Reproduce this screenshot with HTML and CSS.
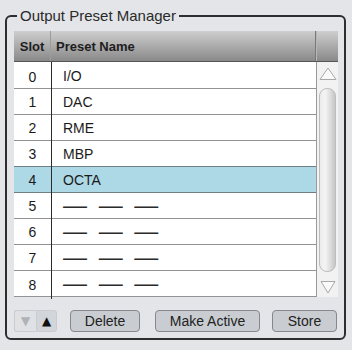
FILE: index.html
```html
<!DOCTYPE html>
<html lang="en">
<head>
    <meta charset="UTF-8">
    <meta name="viewport" content="width=device-width, initial-scale=1.0">
    <title>Output Preset Manager</title>
    <link rel="stylesheet" href="styles.css">
</head>
<body>
    <fieldset class="group">
        <legend class="group-title">Output Preset Manager</legend>

        <div class="preset-table">
            <div class="table-head">
                <div class="col-slot">Slot</div>
                <div class="col-name">Preset Name</div>
                <div class="col-corner"></div>
            </div>
            <div class="table-body">
                <div class="rows">
                    <div class="row first"><div class="cell-slot">0</div><div class="cell-name">I/O</div></div>
                    <div class="row"><div class="cell-slot">1</div><div class="cell-name">DAC</div></div>
                    <div class="row"><div class="cell-slot">2</div><div class="cell-name">RME</div></div>
                    <div class="row"><div class="cell-slot">3</div><div class="cell-name">MBP</div></div>
                    <div class="row active"><div class="cell-slot">4</div><div class="cell-name">OCTA</div></div>
                    <div class="row"><div class="cell-slot">5</div><div class="cell-name empty">— — —</div></div>
                    <div class="row"><div class="cell-slot">6</div><div class="cell-name empty">— — —</div></div>
                    <div class="row"><div class="cell-slot">7</div><div class="cell-name empty">— — —</div></div>
                    <div class="row"><div class="cell-slot">8</div><div class="cell-name empty">— — —</div></div>
                </div>
                <div class="scrollbar">
                    <svg class="scroll-arrow up" width="18" height="13" viewBox="0 0 18 13">
                        <polygon points="1,12.5 9,1 17,12.5" fill="#fafafa" stroke="#a8a8a8" stroke-width="1"/>
                    </svg>
                    <div class="thumb"></div>
                    <svg class="scroll-arrow down" width="16" height="13" viewBox="0 0 16 13">
                        <polygon points="1,0.5 8,12 15,0.5" fill="#fafafa" stroke="#a8a8a8" stroke-width="1"/>
                    </svg>
                </div>
            </div>
        </div>

        <div class="actions">
            <div class="stepper">
                <button class="step disabled">&#9660;</button>
                <button class="step">&#9650;</button>
            </div>
            <button class="btn btn-delete">Delete</button>
            <button class="btn btn-active">Make Active</button>
            <button class="btn btn-store">Store</button>
        </div>
    </fieldset>
</body>
</html>
```

FILE: styles.css
```css
body {
    margin: 0;
    padding: 7px 0 0 5px;
    background: #e3e5e9;
    font-family: 'Liberation Sans', Arial, sans-serif;
    color: #1a1a1a;
}

.group {
    box-sizing: border-box;
    width: 341px;
    margin: 0;
    padding: 7px 6px 6px 7px;
    border: 2px solid #2e2e2e;
    border-radius: 6px;
    min-width: 0;
}

.group-title {
    font-size: 15px;
    line-height: 17px;
    padding: 0 3px;
    margin-left: 3px;
    color: #2a2a2a;
}

.preset-table {
    width: 324px;
}

/* Header */
.table-head {
    display: flex;
    height: 30px;
    border-bottom: 1px solid #555;
    background: linear-gradient(#cecece, #898989);
    font-size: 13px;
    font-weight: bold;
    color: #1e1e1e;
}

.table-head > div {
    display: flex;
    align-items: center;
    box-sizing: border-box;
}

.col-slot {
    width: 37px;
    justify-content: center;
    border-right: 1px solid #9c9c9c;
}

.col-name {
    width: 265px;
    padding-left: 5px;
    border-right: 1px solid #777;
}

.col-corner {
    width: 22px;
    border-left: 1px solid #b8b8b8;
}

/* Body */
.table-body {
    display: flex;
    height: 235px;
}

.rows {
    width: 302px;
    background: #fff;
}

.row {
    display: flex;
    height: 25px;
    border-bottom: 1px solid #939393;
    font-size: 14px;
}

.row.first {
    height: 26px;
}

.row.active {
    background: #add8e6;
    border-bottom-color: #6e7e84;
}

.row:nth-child(4) {
    border-bottom-color: #6e7e84;
}

.cell-slot {
    box-sizing: border-box;
    width: 38px;
    border-right: 1px solid #2a2a2a;
    margin-bottom: -1px;
    display: flex;
    align-items: center;
    justify-content: center;
}

.row.first .cell-slot,
.row.first .cell-name {
    padding-top: 2px;
}

.cell-name {
    display: flex;
    align-items: center;
    padding-left: 11px;
}

.cell-name.empty {
    font-size: 24px;
    word-spacing: 5px;
    color: #2a2a2a;
    padding-bottom: 1px;
}

.row:last-child .cell-slot {
    margin-bottom: -3px;
}

/* Scrollbar */
.scrollbar {
    box-sizing: border-box;
    width: 22px;
    border-left: 1px solid #9a9a9a;
    background: #f2f2f2;
    display: flex;
    flex-direction: column;
    align-items: center;
    padding-top: 5px;
}

.scroll-arrow.up {
    margin-left: 1px;
}

.thumb {
    box-sizing: border-box;
    width: 17px;
    height: 184px;
    margin-top: 8px;
    border: 1px solid #bdbdbd;
    border-radius: 8px;
    background: linear-gradient(90deg, #ececec, #f4f4f4 35%, #dcdcdc 70%, #c6c6c6);
}

.scroll-arrow.down {
    margin-top: 9px;
}

/* Buttons */
.actions {
    display: flex;
    margin-top: 13px;
    height: 22px;
}

.stepper {
    display: flex;
}

.step {
    box-sizing: border-box;
    width: 22px;
    height: 22px;
    padding: 0;
    border: 1px solid #c9ccd0;
    background: #d2d5d9;
    font-size: 12px;
    line-height: 1;
    color: #111;
    font-family: 'DejaVu Sans', sans-serif;
}

.step:first-child {
    border-radius: 3px 0 0 3px;
    border-right: none;
}

.step:last-child {
    width: 21px;
    border-radius: 0 3px 3px 0;
}

.step.disabled {
    background: #dfe1e5;
    color: #b0b2b5;
}

.btn {
    box-sizing: border-box;
    height: 22px;
    padding: 0;
    border: 1px solid #85898d;
    border-radius: 4px;
    background: #c9cdd1;
    font-family: 'Liberation Sans', Arial, sans-serif;
    font-size: 14px;
    color: #222;
}

.btn-delete {
    width: 70px;
    margin-left: 13px;
}

.btn-active {
    width: 105px;
    margin-left: 15px;
}

.btn-store {
    width: 65px;
    margin-left: 12px;
}
```
